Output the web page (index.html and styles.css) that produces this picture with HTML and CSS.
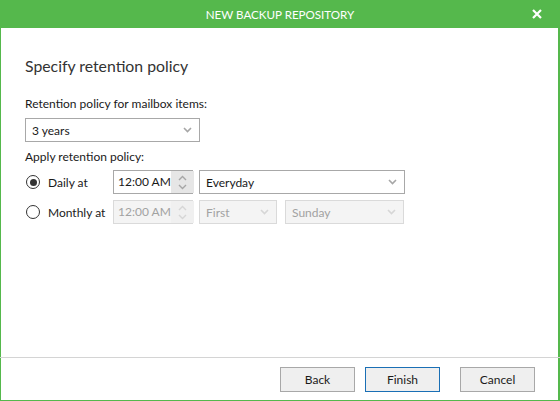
FILE: index.html
```html
<!DOCTYPE html>
<html>
<head>
<meta charset="utf-8">
<link rel="stylesheet" href="styles.css">
</head>
<body>
<div class="window">
  <div class="titlebar">
    <span></span>
    <span class="title">NEW BACKUP REPOSITORY</span>
    <span class="close"><svg width="10" height="10" viewBox="0 0 10 10"><path d="M1 1 L9 9 M9 1 L1 9" stroke="#fff" stroke-width="2.2" fill="none"/></svg></span>
  </div>
  <div class="content">
    <h1 class="heading">Specify retention policy</h1>
    <div class="label">Retention policy for mailbox items:</div>
    <div class="select w-main"><span>3 years</span><svg class="chev" width="9" height="6" viewBox="0 0 9 6"><path d="M1 1 L4.5 4.5 L8 1" stroke="#a6a6a6" stroke-width="1.6" fill="none"/></svg></div>
    <div class="label apply">Apply retention policy:</div>
    <div class="rows">
      <div class="row">
        <div class="opt"><span class="radio checked"></span><span>Daily at</span></div>
        <div class="time">
          <span class="tval">12:00 AM</span>
          <span class="spin">
            <svg width="9" height="6" viewBox="0 0 9 6"><path d="M1 5 L4.5 1.5 L8 5" stroke="#a6a6a6" stroke-width="1.4" fill="none"/></svg>
            <svg width="9" height="6" viewBox="0 0 9 6"><path d="M1 1 L4.5 4.5 L8 1" stroke="#a6a6a6" stroke-width="1.4" fill="none"/></svg>
          </span>
        </div>
        <div class="select w-every"><span>Everyday</span><svg class="chev" width="9" height="6" viewBox="0 0 9 6"><path d="M1 1 L4.5 4.5 L8 1" stroke="#a6a6a6" stroke-width="1.6" fill="none"/></svg></div>
      </div>
      <div class="row">
        <div class="opt"><span class="radio"></span><span>Monthly at</span></div>
        <div class="time disabled">
          <span class="tval">12:00 AM</span>
          <span class="spin">
            <svg width="9" height="6" viewBox="0 0 9 6"><path d="M1 5 L4.5 1.5 L8 5" stroke="#d6d6d6" stroke-width="1.4" fill="none"/></svg>
            <svg width="9" height="6" viewBox="0 0 9 6"><path d="M1 1 L4.5 4.5 L8 1" stroke="#d6d6d6" stroke-width="1.4" fill="none"/></svg>
          </span>
        </div>
        <div class="select disabled w-first"><span>First</span><svg class="chev" width="9" height="6" viewBox="0 0 9 6"><path d="M1 1 L4.5 4.5 L8 1" stroke="#d6d6d6" stroke-width="1.6" fill="none"/></svg></div>
        <div class="select disabled w-day"><span>Sunday</span><svg class="chev" width="9" height="6" viewBox="0 0 9 6"><path d="M1 1 L4.5 4.5 L8 1" stroke="#d6d6d6" stroke-width="1.6" fill="none"/></svg></div>
      </div>
    </div>
  </div>
  <div class="footer">
    <button class="btn">Back</button>
    <button class="btn default">Finish</button>
    <button class="btn cancel">Cancel</button>
  </div>
</div>
</body>
</html>
```
FILE: styles.css
```css
* { box-sizing: border-box; }
html, body { margin: 0; padding: 0; background: #fff; }
body { font-family: "Segoe UI", Lato, "Noto Sans", sans-serif; font-size: 12px; color: #1a1a1a; }
.window {
  width: 560px; height: 401px;
  display: flex; flex-direction: column;
  border-left: 1px solid #55b84c;
  border-right: 2px solid #55b84c;
  border-bottom: 1px solid #55b84c;
}
.titlebar {
  height: 28px; flex: none;
  background: #55b84c;
  display: grid; grid-template-columns: 1fr auto 1fr; align-items: center;
  color: #fff; font-size: 11.6px;
  margin: 0 -2px 0 -1px;
}
.close { justify-self: end; margin-right: 18px; display: flex; }
.content { flex: 1; padding: 0 24px; }
.heading { font-size: 15.8px; font-weight: normal; color: #333; margin: 27px 0 0; line-height: 22px; }
.label { margin-top: 19px; line-height: 16px; }
.label.apply { margin-top: 7px; }
.select {
  height: 24px; border: 1px solid #a8a8a8; background: #fff;
  display: flex; align-items: center; justify-content: space-between;
  padding: 0 7px 0 6px;
}
.w-main { width: 175px; margin-top: 6px; }
.w-every { width: 206px; }
.w-first { width: 78px; }
.w-day { width: 119px; margin-left: 8px; }
.rows { display: flex; flex-direction: column; gap: 6px; margin-top: 5px; }
.row { display: flex; align-items: center; height: 24px; }
.opt { width: 88px; display: flex; align-items: center; gap: 8px; padding-left: 1px; }
.radio { width: 14px; height: 14px; border: 1px solid #333; border-radius: 50%; display: flex; align-items: center; justify-content: center; background: #fff; }
.radio.checked::after { content: ""; width: 7px; height: 7px; border-radius: 50%; background: #333; }
.time {
  width: 80px; height: 24px; border: 1px solid #a8a8a8; display: flex; margin-right: 6px; background: #fff;
}
.tval { flex: 1; white-space: nowrap; padding-left: 4px; line-height: 22px; }
.spin { width: 23px; flex: none; background: #e6e6e6; display: flex; flex-direction: column; align-items: center; justify-content: space-around; padding: 2px 0; }
.spin svg { display: block; }
.disabled { border-color: #dadada; background: #f4f4f4; color: #a2a2a2; }
.time.disabled .spin { background: #f0f0f0; }
.footer {
  flex: none; border-top: 1px solid #d4d4d4;
  padding: 9px 25px 8px 0;
  display: flex; justify-content: flex-end; gap: 10px;
  margin: 0 -2px 0 -1px;
}
.btn {
  width: 75px; height: 25px; font: inherit; color: #1a1a1a;
  background: #efefef; border: 1px solid #a8a8a8; padding: 0;
}
.btn.default { border-color: #1a6fb5; }
.btn.cancel { margin-left: 10px; }
```
